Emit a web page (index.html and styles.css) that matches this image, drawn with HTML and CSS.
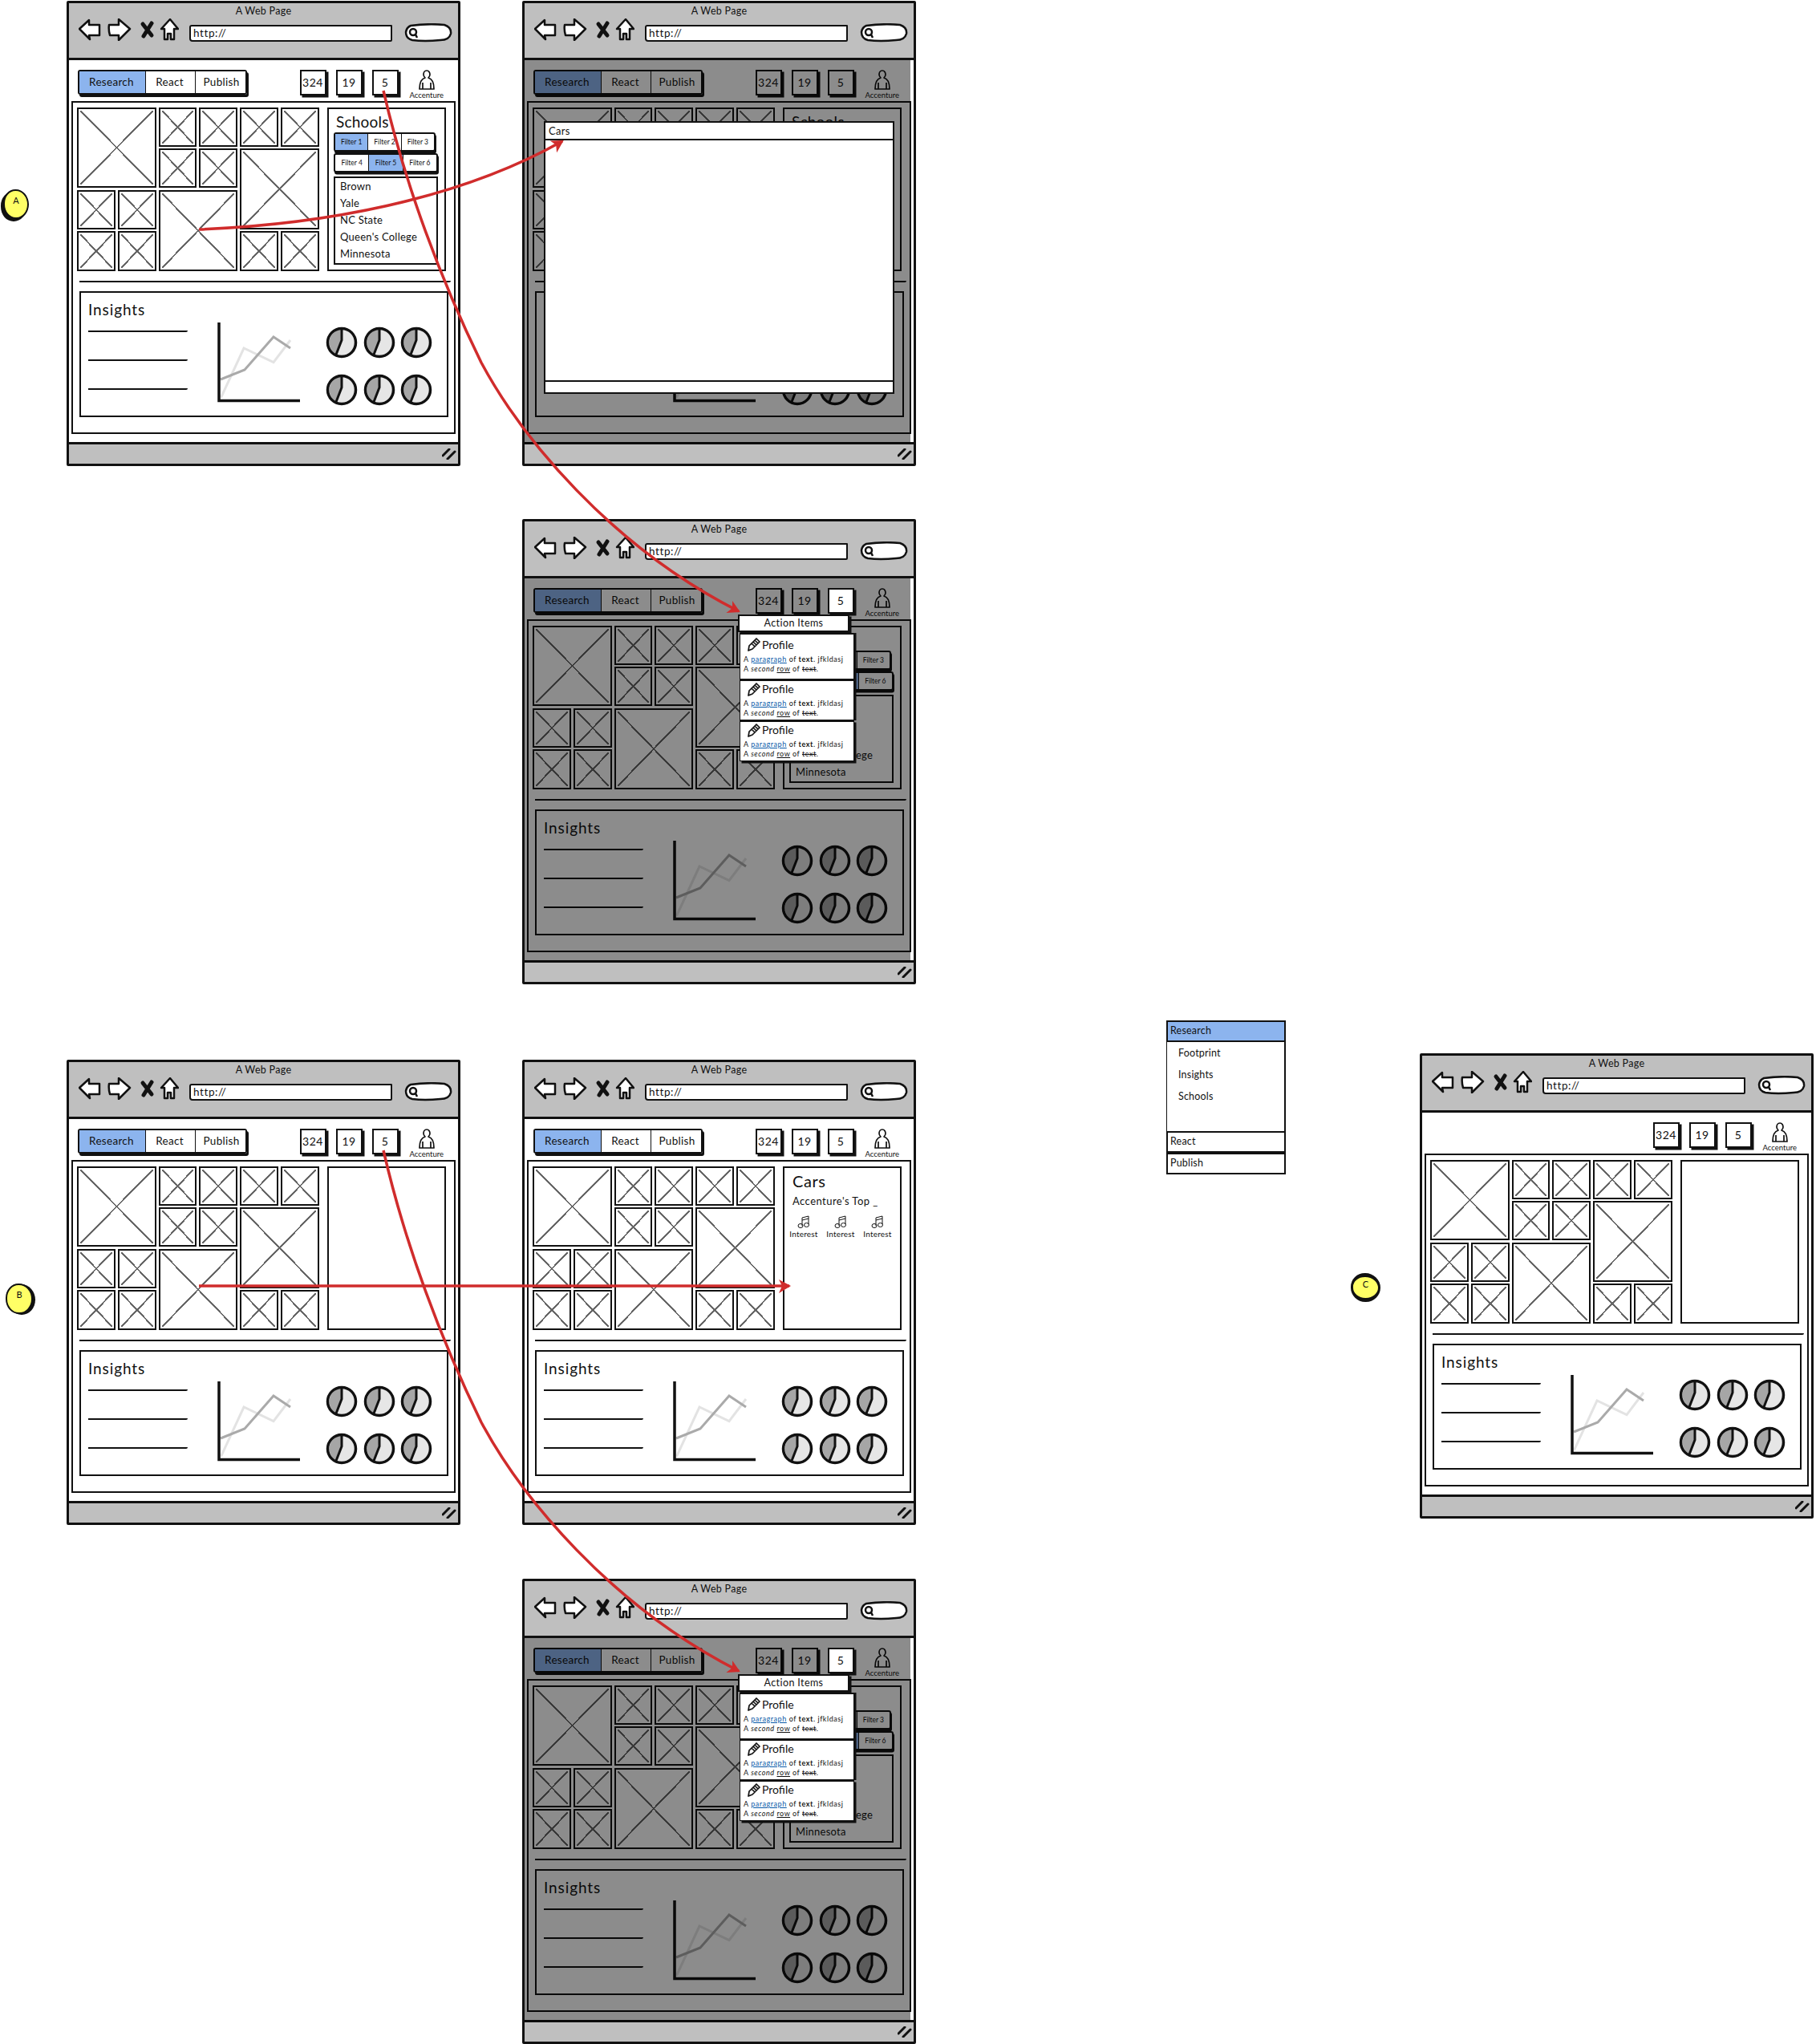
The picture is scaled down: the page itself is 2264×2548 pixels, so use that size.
FILE: index.html
```html
<!DOCTYPE html>
<html lang="en">
<head>
<meta charset="utf-8">
<title>Wireframes</title>
<link rel="stylesheet" href="styles.css">
</head>
<body>
<svg class="defs" width="0" height="0" aria-hidden="true">
<defs>
<symbol id="nav" viewBox="0 0 125 28">
<path class="ic" d="M1 13L13 2L13 8L26 8L26 21L13 21L14 26Z"/>
<path class="ic" d="M38 8L50 8L50 1L64 13L50 27L50 21L39 21Q37 14 38 8Z"/>
<path class="ic-x" d="M80 7L91 21M91 6L81 22"/>
<path class="ic" d="M114 1L124 13L119 13L119 26L115 26L115 19L111 19L111 26L107 26L107 13L103 13Z"/>
</symbol>
<symbol id="search" viewBox="0 0 60 24">
<path class="ic" d="M8 3Q30 0 50 2Q59 5 58 13Q56 21 45 21Q25 23 10 21Q2 19 2 11Q3 5 8 3Z"/>
<circle class="mag" cx="11" cy="11" r="4"/><path class="mag" d="M14 14L16 18"/>
</symbol>
<symbol id="person" viewBox="0 0 24 26">
<path class="thin" d="M12 1C9 1 8 4 8 6C8 8 9 9 10 10C6 11 3 14 3 24L21 24C21 14 18 11 14 10C15 9 16 8 16 6C16 4 15 1 12 1ZM7 16L7 24M17 16L17 24"/>
</symbol>
<symbol id="grip" viewBox="0 0 18 14">
<path class="grip-line" d="M1 9L9 1M7 13L16 4"/>
</symbol>
<symbol id="chart" viewBox="0 0 103 100">
<path class="ln-light" d="M4.500 93.600L33 32L70 49.600L91 22"/>
<path class="ln-dark" d="M4 71L34 59L70 18L91 32"/>
<path class="axes" d="M2 0V97.500H103"/>
</symbol>
<symbol id="pie" viewBox="-20 -20 40 40">
<circle class="pie-b" r="17.500"/>
<path class="pie-w" d="M0 -17V-3L-8 14A17 17 0 0 1 0 -17Z"/>
<path class="pie-l" d="M0 -17V-3L-7 15"/>
<circle class="pie-o" r="17.500"/>
</symbol>
<symbol id="pies" viewBox="0 0 136 100">
<use href="#pie" x="0" y="0" width="40" height="40"/><use href="#pie" x="47" y="0" width="40" height="40"/><use href="#pie" x="93" y="0" width="40" height="40"/>
<use href="#pie" x="0" y="59" width="40" height="40"/><use href="#pie" x="47" y="59" width="40" height="40"/><use href="#pie" x="93" y="59" width="40" height="40"/>
</symbol>
<symbol id="pencil" viewBox="0 0 16 17">
<path class="thin" d="M11 1L15 5L6 14L1 16L2 10ZM9 3L13 7M7 5L11 9M5 7L9 11"/>
</symbol>
<symbol id="note" viewBox="0 0 16 17">
<path class="hair" d="M6 3L14 1L14 11M6 3L6 13M6 6L14 4"/>
<ellipse class="hair" cx="4" cy="13" rx="3" ry="2.500"/><ellipse class="hair" cx="11.500" cy="12" rx="3" ry="2.500"/>
</symbol>
</defs>
</svg>

<main class="canvas">

<section class="browser w1">
<header class="chrome"><div class="win-title">A Web Page</div><div class="addr-row"><svg class="nav"><use href="#nav"/></svg><div class="url">http://</div><svg class="search"><use href="#search"/></svg></div></header>
<div class="page">
<div class="toolbar">
<div class="tabs"><span class="tab tab-r on">Research</span><span class="tab tab-c">React</span><span class="tab tab-p">Publish</span></div>
<div class="stats"><span class="stat">324</span><span class="stat">19</span><span class="stat">5</span></div>
<div class="who"><svg class="person"><use href="#person"/></svg><span>Accenture</span></div>
</div>
<div class="frame">
<div class="top">
<div class="mosaic"><i class="ph big"></i><i class="ph"></i><i class="ph"></i><i class="ph"></i><i class="ph"></i><i class="ph"></i><i class="ph"></i><i class="ph big"></i><i class="ph"></i><i class="ph"></i><i class="ph big"></i><i class="ph"></i><i class="ph"></i><i class="ph"></i><i class="ph"></i></div>
<aside class="side">
<h2 class="side-title">Schools</h2>
<div class="filters f-a"><span class="on">Filter 1</span><span>Filter 2</span><span>Filter 3</span></div>
<div class="filters f-b"><span>Filter 4</span><span class="on">Filter 5</span><span>Filter 6</span></div>
<ul class="schools"><li>Brown</li><li>Yale</li><li>NC State</li><li>Queen's College</li><li>Minnesota</li></ul>
</aside>
</div>
<div class="rule"></div>
<div class="insights"><div class="ins-text"><h2>Insights</h2><div class="ln"></div><div class="ln"></div><div class="ln"></div></div><svg class="chart"><use href="#chart"/></svg><svg class="pies"><use href="#pies"/></svg></div>
</div>
</div>
<footer class="status"><svg class="grip"><use href="#grip"/></svg></footer>
</section>

<section class="browser w2">
<header class="chrome"><div class="win-title">A Web Page</div><div class="addr-row"><svg class="nav"><use href="#nav"/></svg><div class="url">http://</div><svg class="search"><use href="#search"/></svg></div></header>
<div class="page">
<div class="toolbar">
<div class="tabs"><span class="tab tab-r on">Research</span><span class="tab tab-c">React</span><span class="tab tab-p">Publish</span></div>
<div class="stats"><span class="stat">324</span><span class="stat">19</span><span class="stat">5</span></div>
<div class="who"><svg class="person"><use href="#person"/></svg><span>Accenture</span></div>
</div>
<div class="frame">
<div class="top">
<div class="mosaic"><i class="ph big"></i><i class="ph"></i><i class="ph"></i><i class="ph"></i><i class="ph"></i><i class="ph"></i><i class="ph"></i><i class="ph big"></i><i class="ph"></i><i class="ph"></i><i class="ph big"></i><i class="ph"></i><i class="ph"></i><i class="ph"></i><i class="ph"></i></div>
<aside class="side">
<h2 class="side-title">Schools</h2>
<div class="filters f-a"><span class="on">Filter 1</span><span>Filter 2</span><span>Filter 3</span></div>
<div class="filters f-b"><span>Filter 4</span><span class="on">Filter 5</span><span>Filter 6</span></div>
<ul class="schools"><li>Brown</li><li>Yale</li><li>NC State</li><li>Queen's College</li><li>Minnesota</li></ul>
</aside>
</div>
<div class="rule"></div>
<div class="insights"><div class="ins-text"><h2>Insights</h2><div class="ln"></div><div class="ln"></div><div class="ln"></div></div><svg class="chart"><use href="#chart"/></svg><svg class="pies"><use href="#pies"/></svg></div>
</div>
<div class="dim"></div>
</div>
<footer class="status"><svg class="grip"><use href="#grip"/></svg></footer>
<div class="modal"><div class="modal-head">Cars</div><div class="modal-body"></div><div class="modal-foot"></div></div>
</section>

<section class="browser w3">
<header class="chrome"><div class="win-title">A Web Page</div><div class="addr-row"><svg class="nav"><use href="#nav"/></svg><div class="url">http://</div><svg class="search"><use href="#search"/></svg></div></header>
<div class="page">
<div class="toolbar">
<div class="tabs"><span class="tab tab-r on">Research</span><span class="tab tab-c">React</span><span class="tab tab-p">Publish</span></div>
<div class="stats"><span class="stat">324</span><span class="stat">19</span><span class="stat lit">5</span></div>
<div class="who"><svg class="person"><use href="#person"/></svg><span>Accenture</span></div>
</div>
<div class="frame">
<div class="top">
<div class="mosaic"><i class="ph big"></i><i class="ph"></i><i class="ph"></i><i class="ph"></i><i class="ph"></i><i class="ph"></i><i class="ph"></i><i class="ph big"></i><i class="ph"></i><i class="ph"></i><i class="ph big"></i><i class="ph"></i><i class="ph"></i><i class="ph"></i><i class="ph"></i></div>
<aside class="side">
<h2 class="side-title">Schools</h2>
<div class="filters f-a"><span class="on">Filter 1</span><span>Filter 2</span><span>Filter 3</span></div>
<div class="filters f-b"><span>Filter 4</span><span class="on">Filter 5</span><span>Filter 6</span></div>
<ul class="schools"><li>Brown</li><li>Yale</li><li>NC State</li><li>Queen's College</li><li>Minnesota</li></ul>
</aside>
</div>
<div class="rule"></div>
<div class="insights"><div class="ins-text"><h2>Insights</h2><div class="ln"></div><div class="ln"></div><div class="ln"></div></div><svg class="chart"><use href="#chart"/></svg><svg class="pies"><use href="#pies"/></svg></div>
</div>
<div class="dim"></div>
</div>
<footer class="status"><svg class="grip"><use href="#grip"/></svg></footer>
<div class="actions">
<div class="act-head">Action Items</div>
<article class="act tall"><h3><svg class="pencil"><use href="#pencil"/></svg>Profile</h3><p>A <a>paragraph</a> of <b>text</b>. jfkldasj</p><p>A <em>second</em> <u>row</u> of <s>text</s>.</p></article>
<article class="act"><h3><svg class="pencil"><use href="#pencil"/></svg>Profile</h3><p>A <a>paragraph</a> of <b>text</b>. jfkldasj</p><p>A <em>second</em> <u>row</u> of <s>text</s>.</p></article>
<article class="act"><h3><svg class="pencil"><use href="#pencil"/></svg>Profile</h3><p>A <a>paragraph</a> of <b>text</b>. jfkldasj</p><p>A <em>second</em> <u>row</u> of <s>text</s>.</p></article>
</div>
</section>

<section class="browser w4">
<header class="chrome"><div class="win-title">A Web Page</div><div class="addr-row"><svg class="nav"><use href="#nav"/></svg><div class="url">http://</div><svg class="search"><use href="#search"/></svg></div></header>
<div class="page">
<div class="toolbar">
<div class="tabs"><span class="tab tab-r on">Research</span><span class="tab tab-c">React</span><span class="tab tab-p">Publish</span></div>
<div class="stats"><span class="stat">324</span><span class="stat">19</span><span class="stat">5</span></div>
<div class="who"><svg class="person"><use href="#person"/></svg><span>Accenture</span></div>
</div>
<div class="frame">
<div class="top">
<div class="mosaic"><i class="ph big"></i><i class="ph"></i><i class="ph"></i><i class="ph"></i><i class="ph"></i><i class="ph"></i><i class="ph"></i><i class="ph big"></i><i class="ph"></i><i class="ph"></i><i class="ph big"></i><i class="ph"></i><i class="ph"></i><i class="ph"></i><i class="ph"></i></div>
<aside class="side"></aside>
</div>
<div class="rule"></div>
<div class="insights"><div class="ins-text"><h2>Insights</h2><div class="ln"></div><div class="ln"></div><div class="ln"></div></div><svg class="chart"><use href="#chart"/></svg><svg class="pies"><use href="#pies"/></svg></div>
</div>
</div>
<footer class="status"><svg class="grip"><use href="#grip"/></svg></footer>
</section>

<section class="browser w5">
<header class="chrome"><div class="win-title">A Web Page</div><div class="addr-row"><svg class="nav"><use href="#nav"/></svg><div class="url">http://</div><svg class="search"><use href="#search"/></svg></div></header>
<div class="page">
<div class="toolbar">
<div class="tabs"><span class="tab tab-r on">Research</span><span class="tab tab-c">React</span><span class="tab tab-p">Publish</span></div>
<div class="stats"><span class="stat">324</span><span class="stat">19</span><span class="stat">5</span></div>
<div class="who"><svg class="person"><use href="#person"/></svg><span>Accenture</span></div>
</div>
<div class="frame">
<div class="top">
<div class="mosaic"><i class="ph big"></i><i class="ph"></i><i class="ph"></i><i class="ph"></i><i class="ph"></i><i class="ph"></i><i class="ph"></i><i class="ph big"></i><i class="ph"></i><i class="ph"></i><i class="ph big"></i><i class="ph"></i><i class="ph"></i><i class="ph"></i><i class="ph"></i></div>
<aside class="side">
<h2 class="side-title side-cars">Cars</h2>
<div class="side-sub">Accenture's Top _</div>
<div class="interests"><figure><svg class="note"><use href="#note"/></svg><figcaption>Interest</figcaption></figure><figure><svg class="note"><use href="#note"/></svg><figcaption>Interest</figcaption></figure><figure><svg class="note"><use href="#note"/></svg><figcaption>Interest</figcaption></figure></div>
</aside>
</div>
<div class="rule"></div>
<div class="insights"><div class="ins-text"><h2>Insights</h2><div class="ln"></div><div class="ln"></div><div class="ln"></div></div><svg class="chart"><use href="#chart"/></svg><svg class="pies"><use href="#pies"/></svg></div>
</div>
</div>
<footer class="status"><svg class="grip"><use href="#grip"/></svg></footer>
</section>

<section class="browser w6">
<header class="chrome"><div class="win-title">A Web Page</div><div class="addr-row"><svg class="nav"><use href="#nav"/></svg><div class="url">http://</div><svg class="search"><use href="#search"/></svg></div></header>
<div class="page">
<div class="toolbar">
<div class="tabs"><span class="tab tab-r on">Research</span><span class="tab tab-c">React</span><span class="tab tab-p">Publish</span></div>
<div class="stats"><span class="stat">324</span><span class="stat">19</span><span class="stat lit">5</span></div>
<div class="who"><svg class="person"><use href="#person"/></svg><span>Accenture</span></div>
</div>
<div class="frame">
<div class="top">
<div class="mosaic"><i class="ph big"></i><i class="ph"></i><i class="ph"></i><i class="ph"></i><i class="ph"></i><i class="ph"></i><i class="ph"></i><i class="ph big"></i><i class="ph"></i><i class="ph"></i><i class="ph big"></i><i class="ph"></i><i class="ph"></i><i class="ph"></i><i class="ph"></i></div>
<aside class="side">
<h2 class="side-title">Schools</h2>
<div class="filters f-a"><span class="on">Filter 1</span><span>Filter 2</span><span>Filter 3</span></div>
<div class="filters f-b"><span>Filter 4</span><span class="on">Filter 5</span><span>Filter 6</span></div>
<ul class="schools"><li>Brown</li><li>Yale</li><li>NC State</li><li>Queen's College</li><li>Minnesota</li></ul>
</aside>
</div>
<div class="rule"></div>
<div class="insights"><div class="ins-text"><h2>Insights</h2><div class="ln"></div><div class="ln"></div><div class="ln"></div></div><svg class="chart"><use href="#chart"/></svg><svg class="pies"><use href="#pies"/></svg></div>
</div>
<div class="dim"></div>
</div>
<footer class="status"><svg class="grip"><use href="#grip"/></svg></footer>
<div class="actions">
<div class="act-head">Action Items</div>
<article class="act tall"><h3><svg class="pencil"><use href="#pencil"/></svg>Profile</h3><p>A <a>paragraph</a> of <b>text</b>. jfkldasj</p><p>A <em>second</em> <u>row</u> of <s>text</s>.</p></article>
<article class="act"><h3><svg class="pencil"><use href="#pencil"/></svg>Profile</h3><p>A <a>paragraph</a> of <b>text</b>. jfkldasj</p><p>A <em>second</em> <u>row</u> of <s>text</s>.</p></article>
<article class="act"><h3><svg class="pencil"><use href="#pencil"/></svg>Profile</h3><p>A <a>paragraph</a> of <b>text</b>. jfkldasj</p><p>A <em>second</em> <u>row</u> of <s>text</s>.</p></article>
</div>
</section>

<section class="browser w7">
<header class="chrome"><div class="win-title">A Web Page</div><div class="addr-row"><svg class="nav"><use href="#nav"/></svg><div class="url">http://</div><svg class="search"><use href="#search"/></svg></div></header>
<div class="page">
<div class="toolbar">
<div class="stats"><span class="stat">324</span><span class="stat">19</span><span class="stat">5</span></div>
<div class="who"><svg class="person"><use href="#person"/></svg><span>Accenture</span></div>
</div>
<div class="frame">
<div class="top">
<div class="mosaic"><i class="ph big"></i><i class="ph"></i><i class="ph"></i><i class="ph"></i><i class="ph"></i><i class="ph"></i><i class="ph"></i><i class="ph big"></i><i class="ph"></i><i class="ph"></i><i class="ph big"></i><i class="ph"></i><i class="ph"></i><i class="ph"></i><i class="ph"></i></div>
<aside class="side"></aside>
</div>
<div class="rule"></div>
<div class="insights"><div class="ins-text"><h2>Insights</h2><div class="ln"></div><div class="ln"></div><div class="ln"></div></div><svg class="chart"><use href="#chart"/></svg><svg class="pies"><use href="#pies"/></svg></div>
</div>
</div>
<footer class="status"><svg class="grip"><use href="#grip"/></svg></footer>
</section>

<nav class="sitemenu">
<div class="menu-head on">Research</div>
<ul class="menu-body"><li>Footprint</li><li>Insights</li><li>Schools</li></ul>
<div class="menu-head">React</div>
<div class="menu-head">Publish</div>
</nav>

<div class="badge badge-a">A</div>
<div class="badge badge-b">B</div>
<div class="badge badge-c">C</div>

<svg class="arrows" viewBox="0 0 2264 2548">
<defs><marker id="head" markerUnits="userSpaceOnUse" markerWidth="24" markerHeight="24" refX="14" refY="11" orient="auto"><path class="head" d="M1 3L16 11L1 20L5 11Z"/></marker></defs>
<path class="red" marker-end="url(#head)" d="M248 286C400 280 570 250 701 176"/>
<path class="red" marker-end="url(#head)" d="M478 113C505 230 550 350 600 452C650 545 760 680 921 762"/>
<path class="red" marker-end="url(#head)" d="M478 1434C505 1551 550 1671 600 1773C650 1866 760 2001 921 2083"/>
<path class="red" marker-end="url(#head)" d="M248 1603H984"/>
</svg>
</main>
</body>
</html>
```
FILE: styles.css
```css
* { box-sizing: border-box; }
html, body { margin: 0; padding: 0; background: #fff; }
body { font-family: "Lato", "Open Sans", sans-serif; color: #111; }
h2, h3, p, ul, figure { margin: 0; padding: 0; font-weight: 400; }
ul { list-style: none; }
.defs { position: absolute; }

.canvas { position: relative; width: 2264px; height: 2548px; overflow: hidden; }

/* windows on the free canvas */
.browser { position: absolute; width: 491px; height: 580px; border: 3px solid #111; background: #fff; display: flex; flex-direction: column; border-radius: 2px; }
.w1 { left: 83px; top: 1px; }
.w2 { left: 651px; top: 1px; }
.w3 { left: 651px; top: 647px; }
.w4 { left: 83px; top: 1321px; }
.w5 { left: 651px; top: 1321px; }
.w6 { left: 651px; top: 1968px; }
.w7 { left: 1770px; top: 1313px; }

/* chrome */
.chrome { height: 71px; flex: none; background: #bfbfbf; border-bottom: 3px solid #111; }
.win-title { height: 20px; line-height: 20px; text-align: center; font-size: 12.500px; letter-spacing: .3px; }
.addr-row { display: flex; align-items: flex-start; height: 33px; padding-left: 11.500px; }
.nav { width: 125px; height: 28px; flex: none; margin-top: -1px; }
.url { width: 253px; height: 21px; margin-left: 13.500px; margin-top: 7px; background: #fff; border: 2.500px solid #111; border-radius: 3px 1px 2px 4px; font-size: 13.500px; line-height: 16px; padding-left: 3px; letter-spacing: .6px; }
.search { width: 60px; height: 24px; margin-left: 15px; margin-top: 5px; flex: none; }
.ic { fill: #fff; stroke: #111; stroke-width: 2.500; stroke-linejoin: round; }
.ic-x { fill: none; stroke: #111; stroke-width: 5; stroke-linecap: round; }
.mag { fill: none; stroke: #111; stroke-width: 2.500; }
.thin { fill: none; stroke: #111; stroke-width: 1.700; stroke-linejoin: round; }
.hair { fill: none; stroke: #111; stroke-width: 1; }
.grip-line { fill: none; stroke: #111; stroke-width: 3; stroke-linecap: round; }

/* page body */
.page { position: relative; flex: 1; padding: 0 3px; min-height: 0; }
.toolbar { height: 50.500px; display: flex; align-items: flex-start; padding: 11.500px 2.500px 0 8px; }
.tabs { display: flex; height: 31px; border: 2.500px solid #111; border-radius: 3px; box-shadow: 2px 3px 0 #111; font-size: 13.500px; letter-spacing: .3px; }
.tab { display: flex; align-items: center; justify-content: center; background: #fff; border-right: 1.500px solid #111; }
.tab:last-child { border-right: 0; }
.tab-r { width: 83px; padding-right: 2px; }
.tab-c { width: 62px; padding-right: 2px; }
.tab-p { width: 62px; padding-left: 2px; }
.on { background: #8cb4ee; }
.stats { margin-left: auto; display: flex; gap: 12px; }
.stat { width: 33px; height: 32px; background: #fff; border: 2.500px solid #111; box-shadow: 2.500px 2.500px 0 #111; display: flex; align-items: center; justify-content: center; font-size: 14px; letter-spacing: .5px; }
.stat.lit { position: relative; z-index: 3; }
.who { width: 67.500px; margin-left: 1.500px; display: flex; flex-direction: column; align-items: center; font-size: 9.500px; line-height: 11px; }
.person { width: 24px; height: 26px; margin-top: 0; }

/* main frame */
.frame { height: 415.500px; border: 2.500px solid #111; padding: 6px 7px 0 5px; }
.top { display: flex; gap: 10px; height: 204px; }
.mosaic { width: 302px; flex: none; display: grid; grid-template-columns: repeat(6, 1fr); grid-template-rows: repeat(4, 1fr); gap: 2.500px 3px; }
.ph {
  display: block; padding: 2px; min-width: 0; min-height: 0;
  border: 2.500px solid #111; background-color: #fff; background-repeat: no-repeat; background-origin: content-box; background-clip: content-box;
  background-image:
    linear-gradient(to top right, transparent calc(50% - 1px), #666 calc(50% - 1px), #666 calc(50% + 1px), transparent calc(50% + 1px)),
    linear-gradient(to bottom right, transparent calc(50% - 1px), #666 calc(50% - 1px), #666 calc(50% + 1px), transparent calc(50% + 1px));
}
.ph.big { grid-column: span 2; grid-row: span 2; }

.side { width: 147.500px; flex: none; border: 2.500px solid #111; padding: 0 6px; background: #fff; }
.side-title { font-size: 19px; height: 29px; line-height: 31px; padding-left: 3px; letter-spacing: .2px; }
.side-cars { font-size: 20px; line-height: 33px; letter-spacing: .6px; padding-left: 4px; }
.filters { display: flex; height: 24px; border: 2px solid #111; border-radius: 3px; box-shadow: 1px 2.500px 0 #111; font-size: 8.500px; background: #fff; }
.filters span { flex: 1; display: flex; align-items: center; justify-content: center; border-right: 1px solid #111; }
.filters span:last-child { border-right: 0; }
.f-a { width: 127px; }
.f-b { width: 130px; margin-top: 2px; }
.schools { margin-top: 5px; width: 130px; height: 110px; border: 2.500px solid #111; padding: 0 6px; font-size: 13px; line-height: 21px; letter-spacing: .25px; }
.side-sub { font-size: 13px; padding-left: 4px; line-height: 18px; letter-spacing: .45px; margin-top: 3px; }
.interests { display: grid; grid-template-columns: 46px 46px 46px; margin-top: 9px; font-size: 10px; letter-spacing: .2px; text-align: center; margin-left: -5px; }
.interests figure { display: flex; flex-direction: column; align-items: center; }
.note { width: 16px; height: 17px; }

.rule { height: 2px; background: #111; margin: 12px -3px 11.500px 3px; border-radius: 0 0 3px 0; }
.insights { display: flex; height: 157px; width: 460px; margin-left: 3px; border: 2.500px solid #111; }
.ins-text { width: 170px; flex: none; padding: 9px 0 0 9px; }
.ins-text h2 { font-size: 19px; line-height: 24px; letter-spacing: .9px; }
.ln { width: 124px; height: 2px; background: #111; margin-bottom: 34px; border-radius: 0 0 4px 0; }
.ins-text h2 + .ln { margin-top: 14px; }
.chart { width: 103px; height: 100px; margin-top: 37px; flex: none; }
.pies { width: 136px; height: 100px; margin: 42px 0 0 31.500px; flex: none; }
.axes { fill: none; stroke: #111; stroke-width: 3.500; }
.ln-dark { fill: none; stroke: #aaa; stroke-width: 3; }
.ln-light { fill: none; stroke: #e3e3e3; stroke-width: 3; }
.pie-b { fill: #e6e6e6; }
.pie-w { fill: #a6a6a6; }
.pie-l { fill: none; stroke: #111; stroke-width: 3; }
.pie-o { fill: none; stroke: #111; stroke-width: 3.500; }

.status { height: 27px; flex: none; background: #bfbfbf; border-top: 3px solid #111; display: flex; justify-content: flex-end; align-items: center; padding-right: 2px; }
.grip { width: 18px; height: 14px; }

/* overlays */
.dim { position: absolute; z-index: 2; top: 0; left: 0; right: 4px; bottom: -2px; background: rgba(0, 0, 0, .45); }
.modal { position: absolute; z-index: 4; left: 24px; top: 147px; width: 437px; height: 340px; background: #fff; border: 2.500px solid #111; display: flex; flex-direction: column; font-size: 13px; letter-spacing: .3px; }
.modal-head { height: 22px; line-height: 20px; padding-left: 4px; border-bottom: 2.500px solid #111; }
.modal-body { flex: 1; }
.modal-foot { height: 15px; border-top: 2.500px solid #111; }

.actions { position: absolute; z-index: 4; left: 266px; top: 116px; width: 146px; }
.act-head { width: 139px; height: 22px; background: #fff; border: 2px solid #111; box-shadow: 2.500px 2.500px 0 #111; text-align: center; font-size: 12.500px; line-height: 18px; letter-spacing: .4px; }
.act { margin-left: 2px; width: 143px; height: 51px; background: #fff; border: 1.500px solid #111; border-top-width: 2.500px; box-shadow: 2.500px 0 0 #111; padding: 1px 0 0 4px; font-size: 9px; line-height: 12px; letter-spacing: .55px; }
.act.tall { height: 58px; margin-top: 1px; padding-top: 3.500px; }
.act:last-child { box-shadow: 2.500px 2.500px 0 #111; }
.act h3 { display: flex; align-items: center; font-size: 14px; line-height: 18px; padding-left: 4.500px; margin-bottom: 3px; letter-spacing: 0; }
.act p { white-space: nowrap; }
.act a { color: #0a5aa8; text-decoration: underline; }
.act b { font-weight: 700; }
.pencil { width: 16px; height: 17px; margin-right: 2.500px; }

/* tab menu on the canvas */
.sitemenu { position: absolute; left: 1454px; top: 1272px; width: 149px; font-size: 12.500px; letter-spacing: .2px; }
.menu-head { height: 27px; border: 2.500px solid #111; padding-left: 3px; line-height: 21px; background: #fff; }
.menu-head.on { background: #8cb4ee; }
.menu-body { height: 111px; border-left: 1.500px solid #111; border-right: 2.500px solid #111; padding: 0 0 0 14px; line-height: 27px; }

/* sticky badges */
.badge { position: absolute; border-radius: 48% 52% 50% 50%; background: #ffff66; border: 2px solid #111; font-size: 11px; text-align: center; line-height: 24px; }
.badge-a { left: 4px; top: 236px; width: 32px; height: 37px; box-shadow: -3px 3px 0 #111; }
.badge-b { left: 7px; top: 1600px; width: 34px; height: 38px; box-shadow: 3px 1px 0 #111; }
.badge-c { left: 1684px; top: 1587px; width: 37px; height: 36px; border-width: 5px 3px 5px 3px; line-height: 18px; }

/* flow arrows */
.arrows { position: absolute; left: 0; top: 0; width: 2264px; height: 2548px; z-index: 10; pointer-events: none; }
.red { fill: none; stroke: #d02c2c; stroke-width: 3.500; }
.head { fill: #d02c2c; }
```
